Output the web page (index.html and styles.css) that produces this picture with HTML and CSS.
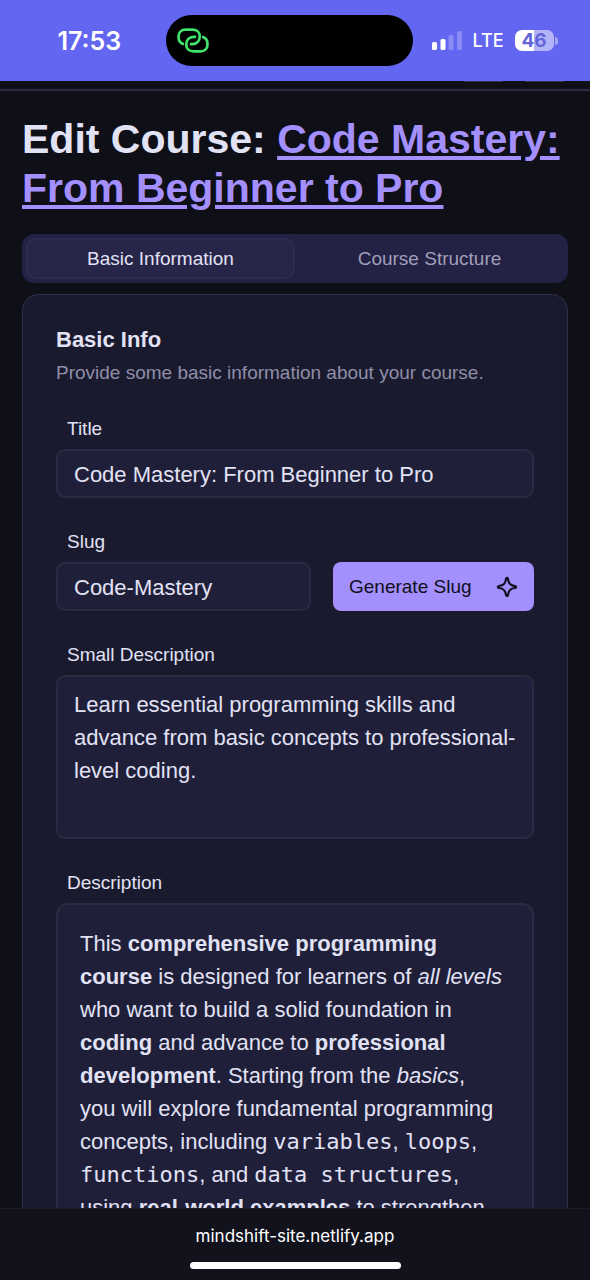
FILE: index.html
```html
<!DOCTYPE html>
<html lang="en">
<head>
<meta charset="utf-8">
<meta name="viewport" content="width=device-width, initial-scale=1">
<title>Edit Course</title>
<link rel="stylesheet" href="styles.css">
</head>
<body>
<div class="screen">
  <div class="status-bar">
    <div class="status-time">17:53</div>
    <div class="island">
      <svg class="island-icon" viewBox="0 0 100 80" aria-hidden="true">
        <path d="M20 50C10 47 7 38 7 29C7 16 15 8 28 8H48C62 8 70 16 70 27C70 41 62 51 48 51H44"/>
        <path d="M80 30C90 33 93 42 93 51C93 64 85 72 72 72H52C38 72 30 64 30 53C30 39 38 29 52 29H56"/>
      </svg>
    </div>
    <div class="status-right">
      <svg class="signal" viewBox="0 0 30 20" aria-hidden="true">
        <rect x="0" y="11" width="5" height="8" rx="1.5"/>
        <rect x="8.500" y="8" width="5" height="11" rx="1.5"/>
        <rect class="dim" x="16.500" y="4" width="5" height="15" rx="1.5"/>
        <rect class="dim" x="25" y="0" width="5" height="19" rx="1.5"/>
      </svg>
      <span class="network">LTE</span>
      <span class="battery"><span class="battery-body">46</span><span class="battery-cap"></span></span>
    </div>
  </div>

  <main class="viewport">
    <header class="site-header"><span class="header-edge"></span><span class="header-edge"></span></header>
    <div class="content">
      <h1 class="page-title">Edit Course: <a class="course-name" href="#">Code Mastery: From Beginner to Pro</a></h1>
      <div class="tabs" role="tablist">
        <button class="tab tab-active" type="button" role="tab" aria-selected="true">Basic Information</button>
        <button class="tab" type="button" role="tab" aria-selected="false">Course Structure</button>
      </div>
      <section class="card">
        <div class="card-header">
          <h2 class="card-title">Basic Info</h2>
          <p class="card-description">Provide some basic information about your course.</p>
        </div>
        <form class="form">
          <div class="field">
            <label class="label" for="title">Title</label>
            <input class="input" id="title" type="text" value="Code Mastery: From Beginner to Pro">
          </div>
          <div class="field">
            <label class="label" for="slug">Slug</label>
            <div class="slug-row">
              <input class="input" id="slug" type="text" value="Code-Mastery">
              <button class="generate" type="button">Generate Slug
                <svg class="sparkle" viewBox="0 0 24 24" aria-hidden="true"><path d="M12 2C12.700 2 13 2.500 13.100 3.300C13.700 8.400 15.600 10.300 20.700 10.900C21.500 11 22 11.300 22 12C22 12.700 21.500 13 20.700 13.100C15.600 13.700 13.700 15.600 13.100 20.700C13 21.500 12.700 22 12 22C11.300 22 11 21.500 10.900 20.700C10.300 15.600 8.400 13.700 3.300 13.100C2.500 13 2 12.700 2 12C2 11.300 2.500 11 3.300 10.900C8.400 10.300 10.300 8.400 10.900 3.300C11 2.500 11.300 2 12 2Z"/></svg>
              </button>
            </div>
          </div>
          <div class="field">
            <label class="label" for="summary">Small Description</label>
            <textarea class="input textarea" id="summary">Learn essential programming skills and advance from basic concepts to professional-level coding.</textarea>
          </div>
          <div class="field">
            <span class="label" id="description-label">Description</span>
            <div class="editor" contenteditable="true" spellcheck="false" role="textbox" aria-multiline="true" aria-labelledby="description-label">
              <p class="paragraph">This <strong>comprehensive programming course</strong> is designed for learners of <em>all levels</em> who want to build a solid foundation in <strong>coding</strong> and advance to <strong>professional development</strong>. Starting from the <em>basics</em>, you&nbsp;will explore fundamental programming concepts, including <code class="code">variables</code>, <code class="code">loops</code>, <code class="code">functions</code>, and <code class="code">data structures</code>, using <strong>real-world examples</strong> to strengthen</p>
            </div>
          </div>
        </form>
      </section>
    </div>
  </main>

  <footer class="browser-bar">
    <span class="address">mindshift-site.netlify.app</span>
    <span class="home-indicator"></span>
  </footer>
</div>
</body>
</html>
```
FILE: styles.css
```css
* { box-sizing: border-box; }

body {
  margin: 0;
  background: #0f0f18;
  color: #e2e2f5;
  font-family: "Liberation Sans", Arial, sans-serif;
}

.screen {
  display: flex;
  flex-direction: column;
  height: 100vh;
  overflow: hidden;
}

.status-bar {
  display: grid;
  grid-template-columns: 1fr 247px 1fr;
  align-items: center;
  flex: none;
  padding: 15px 12px 15px 0;
  background: #6366f1;
  color: #fff;
  font-family: Inter, sans-serif;
}

.status-time {
  padding-left: 13px;
  text-align: center;
  font-size: 25px;
  font-weight: 600;
}

.island {
  display: flex;
  align-items: center;
  height: 51px;
  padding-left: 10px;
  border-radius: 26px;
  background: #000;
}

.island-icon {
  width: 34px;
  height: 27px;
  fill: none;
  stroke: #40e46c;
  stroke-width: 8;
  stroke-linecap: round;
}

.status-right {
  display: flex;
  align-items: center;
  gap: 11px;
  padding-left: 19px;
}

.signal { width: 30px; height: 20px; fill: #fff; }
.dim { opacity: 0.25; }

.network { font-size: 18px; font-weight: 500; }

.battery { display: flex; align-items: center; gap: 1px; }

.battery-body {
  width: 39px;
  border-radius: 7px;
  background: linear-gradient(90deg, #fff 48%, #b3b4f8 48%);
  color: #6366d8;
  font-size: 19px;
  font-weight: 700;
  line-height: 21px;
  text-align: center;
}

.battery-cap {
  width: 3px;
  height: 8px;
  border-radius: 0 3px 3px 0;
  background: #a2a4f6;
}

.viewport { flex: 1; min-height: 0; overflow: hidden; }

.site-header {
  display: flex;
  justify-content: flex-end;
  gap: 22px;
  height: 10px;
  padding-right: 26px;
  border-bottom: 2px solid #2b2a40;
}

.header-edge { width: 39px; height: 1px; background: #34334e; }

.content { padding: 24px 22px; }

.page-title {
  margin: 0 0 21px;
  font-size: 41px;
  font-weight: 700;
  line-height: 49px;
}

.course-name { color: #a48fff; text-decoration: underline; }

.tabs {
  display: grid;
  grid-template-columns: 1fr 1fr;
  margin-bottom: 11px;
  padding: 4px;
  border-radius: 12px;
  background: #232144;
}

.tab {
  height: 41px;
  padding: 0;
  border: 2px solid transparent;
  border-radius: 9px;
  background: none;
  color: #a09fb9;
  font: inherit;
  font-size: 19px;
}

.tab-active { border-color: #2d2b4f; background: #272548; color: #e2e2f5; }

.card {
  padding: 33px;
  border: 1px solid #302f48;
  border-radius: 16px;
  background: #1a1a2e;
}

.card-header { margin-bottom: 32px; }

.card-title { margin: 0 0 7px; font-size: 22px; line-height: 24px; }

.card-description {
  margin: 0;
  color: #8f8ea8;
  font-size: 19px;
  line-height: 28px;
}

.form { display: flex; flex-direction: column; gap: 34px; }
.field { display: flex; flex-direction: column; gap: 10px; }
.label { padding-left: 11px; font-size: 19px; line-height: 20px; }

.input {
  width: 100%;
  min-width: 0;
  height: 49px;
  padding: 2px 16px 0;
  border: 2px solid #2b2a43;
  border-radius: 9px;
  background: #201f39;
  color: #e2e2f5;
  font: inherit;
  font-size: 22px;
}

.slug-row { display: grid; grid-template-columns: 1fr 201px; gap: 22px; }

.generate {
  display: flex;
  align-items: center;
  justify-content: space-between;
  padding: 0 16px;
  border: 0;
  border-radius: 8px;
  background: #a48fff;
  color: #0f0f1a;
  font: inherit;
  font-size: 19px;
}

.sparkle {
  width: 22px;
  height: 22px;
  fill: none;
  stroke: #0f0f1a;
  stroke-width: 2.4;
  stroke-linejoin: round;
}

.textarea {
  height: 164px;
  padding: 11px 16px;
  overflow: hidden;
  line-height: 33px;
  resize: none;
}

.editor {
  padding: 22px;
  border: 2px solid #2b2a43;
  border-radius: 12px;
  background: #201f39;
  font-size: 22px;
  line-height: 33px;
}

.paragraph { margin: 0; }
.code { font-family: "DejaVu Sans Mono", monospace; font-size: 22px; }

.browser-bar {
  display: flex;
  flex: none;
  flex-direction: column;
  align-items: center;
  gap: 16px;
  padding: 17px 0 11px;
  border-top: 1px solid #1b1a27;
  background: #12121d;
  color: #fff;
  font-family: Inter, sans-serif;
}

.address { font-size: 17px; line-height: 20px; }

.home-indicator {
  width: 211px;
  height: 7px;
  border-radius: 4px;
  background: #fff;
}
```
